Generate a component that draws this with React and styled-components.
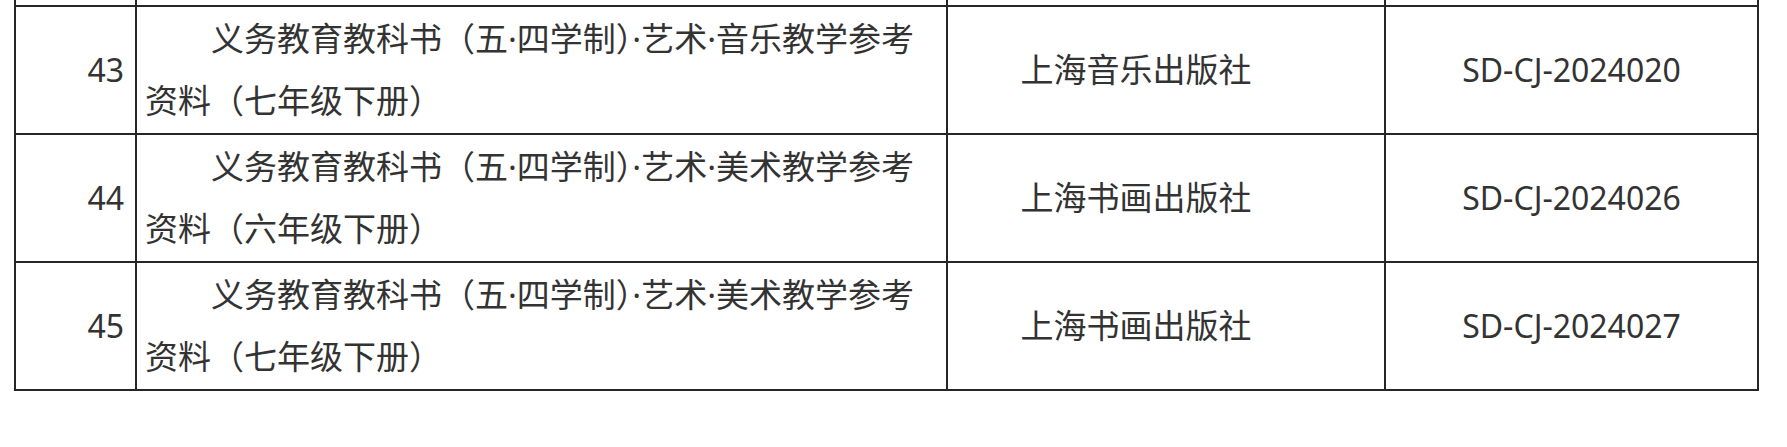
import React from 'react'
import styled, { createGlobalStyle } from 'styled-components'

const GlobalStyle = createGlobalStyle`
  html, body {
    margin: 0;
    padding: 0;
    background: #ffffff;
  }
  body {
    font-family: "Noto Sans", "Noto Sans CJK SC", sans-serif;
    color: #333333;
  }
`

const Page = styled.div`
  width: 1787px;
  height: 447px;
  overflow: hidden;
  padding-left: 14px;
  box-sizing: border-box;
`

const Table = styled.table`
  border-collapse: collapse;
  table-layout: fixed;
  width: 1743px;
  border: 2px solid #262626;
  border-top: none;
  font-size: 33px;
  color: #333333;
`

const Cell = styled.td`
  border: 2px solid #262626;
  padding: 0 8px;
  line-height: 62px;
  vertical-align: middle;
  word-break: break-all;
`

const StubCell = styled.td`
  border-left: 2px solid #262626;
  border-right: 2px solid #262626;
  border-bottom: 2px solid #262626;
  border-top: none;
  height: 5px;
  padding: 0;
`

const NumCell = styled(Cell)`
  text-align: right;
  padding-right: 11px;
  font-size: 32px;
`

const TitleCell = styled(Cell)`
  text-align: left;
  text-indent: 2em;
  padding-right: 12px;
`

const PressCell = styled(Cell)`
  text-align: center;
  padding-right: 68px;
`

const CodeCell = styled(Cell)`
  text-align: center;
  font-size: 32px;
`

const Row = styled.tr`
  height: 128px;
`

const rows = [
  { no: 43, title: '义务教育教科书（五·四学制）·艺术·音乐教学参考资料（七年级下册）', press: '上海音乐出版社', code: 'SD-CJ-2024020' },
  { no: 44, title: '义务教育教科书（五·四学制）·艺术·美术教学参考资料（六年级下册）', press: '上海书画出版社', code: 'SD-CJ-2024026' },
  { no: 45, title: '义务教育教科书（五·四学制）·艺术·美术教学参考资料（七年级下册）', press: '上海书画出版社', code: 'SD-CJ-2024027' },
]

export default function App() {
  return (
    <Page>
      <GlobalStyle />
      <Table>
        <colgroup>
          <col style={{ width: 121 }} />
          <col style={{ width: 811 }} />
          <col style={{ width: 438 }} />
          <col style={{ width: 373 }} />
        </colgroup>
        <tbody>
          <tr>
            <StubCell />
            <StubCell />
            <StubCell />
            <StubCell />
          </tr>
          {rows.map((r) => (
            <Row key={r.no}>
              <NumCell>{r.no}</NumCell>
              <TitleCell>{r.title}</TitleCell>
              <PressCell>{r.press}</PressCell>
              <CodeCell>{r.code}</CodeCell>
            </Row>
          ))}
        </tbody>
      </Table>
    </Page>
  )
}
